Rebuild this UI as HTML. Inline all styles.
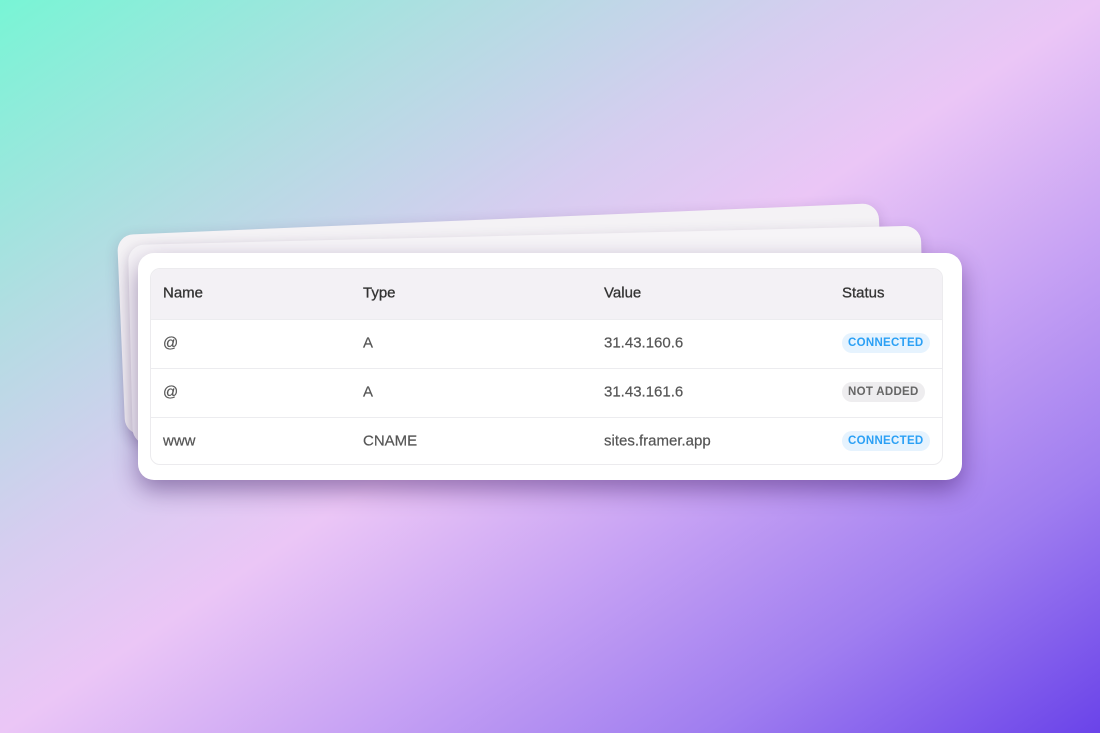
<!DOCTYPE html>
<html><head><style>
*{margin:0;padding:0;box-sizing:border-box}
html,body{width:1100px;height:733px;overflow:hidden}
body{position:relative;font-family:"Liberation Sans",sans-serif;
background:linear-gradient(to bottom right,#78f5d5 0%,#b2dde2 22%,#d6cdf0 38%,#ebc6f6 50%,#c9a4f4 65%,#a07ef0 82%,#6a43e9 100%);}
.card{position:absolute;background:#fff;border-radius:16px;transform-origin:0 0}
.c3{left:117px;top:235px;width:762px;height:200px;transform:rotate(-2.4deg);background:#f4f2f5;box-shadow:0 4px 14px rgba(60,30,90,.2)}
.c2{left:128px;top:245px;width:793px;height:200px;transform:rotate(-1.4deg);background:#f6f4f7;box-shadow:0 4px 14px rgba(60,30,90,.2)}
.main{left:138px;top:253px;width:824px;height:227px;box-shadow:0 10px 24px rgba(50,15,90,.45)}
.tbl{position:absolute;left:12px;top:15px;width:793px;height:197px;border:1px solid #ecebee;border-radius:10px;overflow:hidden}
.row{height:49px;border-top:1px solid #ececef;position:relative;font-size:15px;color:#555;-webkit-text-stroke:.2px #555}
.row.h{height:50px;border-top:none;background:#f3f1f5;color:#333;-webkit-text-stroke:.3px #333}
.row span{position:absolute;top:50%;transform:translateY(-55%)}
.n{left:12px}.t{left:212px}.v{left:453px}.s{left:691px}
.b{font-size:11.5px;font-weight:bold;padding:4px 6px;border-radius:10px;letter-spacing:.3px;-webkit-text-stroke:0}
.ok{background:#e6f3fe;color:#2ba0f5}
.na{background:#eeedef;color:#666}
</style></head><body>
<div class="card c3"></div>
<div class="card c2"></div>
<div class="card main"><div class="tbl">
<div class="row h"><span class="n">Name</span><span class="t">Type</span><span class="v">Value</span><span class="s">Status</span></div>
<div class="row"><span class="n">@</span><span class="t">A</span><span class="v">31.43.160.6</span><span class="s b ok">CONNECTED</span></div>
<div class="row"><span class="n">@</span><span class="t">A</span><span class="v">31.43.161.6</span><span class="s b na">NOT ADDED</span></div>
<div class="row"><span class="n">www</span><span class="t">CNAME</span><span class="v">sites.framer.app</span><span class="s b ok">CONNECTED</span></div>
</div></div>
</body></html>
